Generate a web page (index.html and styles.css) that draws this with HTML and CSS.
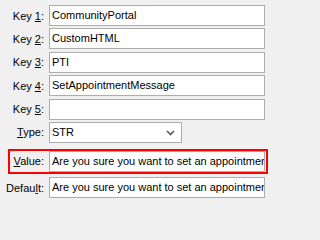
FILE: index.html
```html
<!DOCTYPE html>
<html>
<head>
<meta charset="utf-8">
<link rel="stylesheet" href="styles.css">
</head>
<body>
<div class="form">
  <div class="row">
    <div class="label">Key <u>1</u>:</div>
    <div class="field">CommunityPortal</div>
  </div>
  <div class="row">
    <div class="label">Key <u>2</u>:</div>
    <div class="field">CustomHTML</div>
  </div>
  <div class="row">
    <div class="label">Key <u>3</u>:</div>
    <div class="field">PTI</div>
  </div>
  <div class="row">
    <div class="label">Key <u>4</u>:</div>
    <div class="field">SetAppointmentMessage</div>
  </div>
  <div class="row">
    <div class="label">Key <u>5</u>:</div>
    <div class="field"></div>
  </div>
  <div class="row">
    <div class="label"><u>T</u>ype:</div>
    <div class="field select">STR
      <svg class="chev" width="9" height="6" viewBox="0 0 9 6"><path d="M1 1 L4.5 4.5 L8 1" fill="none" stroke="#5a5a5a" stroke-width="1.6"/></svg>
    </div>
  </div>
  <div class="row highlight">
    <div class="label"><u>V</u>alue:</div>
    <div class="field">Are you sure you want to set an appointment?</div>
  </div>
  <div class="row last">
    <div class="label">Defau<u>l</u>t:</div>
    <div class="field">Are you sure you want to set an appointment?</div>
  </div>
</div>
</body>
</html>
```
FILE: styles.css
```css
html {
  background: #f0f0f0;
}
body {
  margin: 0;
  padding: 0;
  width: 271px;
  height: 202px;
  overflow: hidden;
  font-family: "Liberation Sans", Arial, sans-serif;
  font-size: 11px;
  color: #000;
}
.form {
  display: flex;
  flex-direction: column;
  padding-top: 5px;
}
.row {
  display: flex;
  align-items: center;
  gap: 5px;
  height: 21px;
  margin-bottom: 2.4px;
}
.label {
  width: 44px;
  text-align: right;
  white-space: nowrap;
  flex: none;
}
.label u {
  text-underline-offset: 1px;
}
.field {
  box-sizing: border-box;
  width: 216px;
  height: 21px;
  border: 1px solid #adadad;
  background: #fff;
  padding: 0 2px;
  line-height: 19px;
  white-space: nowrap;
  overflow: hidden;
  flex: none;
}
.select {
  width: 133px;
  position: relative;
}
.chev {
  position: absolute;
  right: 6px;
  top: 7px;
}
.highlight {
  box-sizing: border-box;
  height: 25px;
  margin: 4px 0 3px 8px;
  width: 260px;
  border: 2px solid #ff0000;
  padding: 0 1px 0 0;
  align-items: flex-start;
}
.highlight .label {
  width: 34px;
  line-height: 21px;
}
.last {
  margin-bottom: 0;
}
```
